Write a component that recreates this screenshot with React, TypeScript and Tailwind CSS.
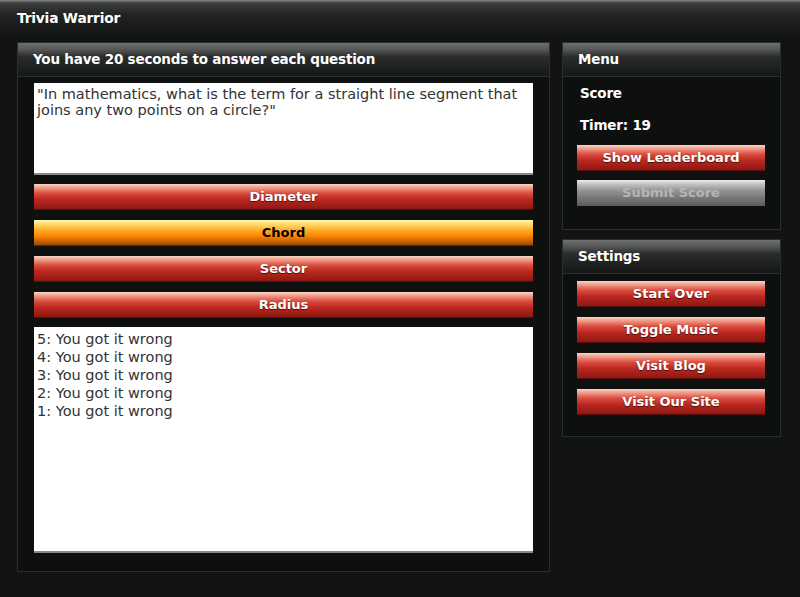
import React from 'react';

const answers = [
  { label: 'Diameter', active: false },
  { label: 'Chord', active: true },
  { label: 'Sector', active: false },
  { label: 'Radius', active: false },
];

const log = [5, 4, 3, 2, 1].map((n) => `${n}: You got it wrong`);

const font = 'font-["DejaVu_Sans",Verdana,sans-serif]';
const redBtn =
  'h-[26px] w-full flex items-center justify-center text-[13px] font-bold text-white [text-shadow:0_1px_1px_rgba(0,0,0,0.6)] bg-[linear-gradient(to_bottom,#fbd6c6_0%,#ef9c88_15%,#d84a3e_38%,#bb2820_62%,#8d1812_100%)] border-b border-[#5a0d0a]';
const orangeBtn =
  'h-[26px] w-full flex items-center justify-center text-[13px] font-bold text-black bg-[linear-gradient(to_bottom,#fff6b0_0%,#ffe070_15%,#ffb030_38%,#ff8a00_62%,#a04800_100%)] border-b border-[#5a2a00]';
const grayBtn =
  'h-[26px] w-full flex items-center justify-center text-[13px] font-bold text-[#b5b5b5] bg-[linear-gradient(to_bottom,#eeeeee_0%,#c4c4c4_15%,#959595_40%,#7a7a7a_65%,#5a5a5a_100%)]';

function PanelHeader({ title, h }: { title: string; h: string }) {
  return (
    <div
      className={`${h} flex items-center px-[15px] text-[13.5px] font-bold text-white tracking-[-0.2px] bg-[linear-gradient(to_bottom,#6e706f_0%,#555756_20%,#2a2c2b_42%,#161817_100%)] border-b border-[#2c302e]`}
    >
      {title}
    </div>
  );
}

export default function App() {
  return (
    <div className={`w-[800px] h-[597px] bg-[#111412] overflow-hidden ${font}`}>
      {/* Title bar */}
      <header className="h-[37px] flex items-center px-[17px] text-[13.8px] font-bold text-white tracking-[-0.2px] bg-[linear-gradient(to_bottom,#8a8a8a_0%,#3c3e3d_8%,#222423_40%,#121413_100%)]">
        Trivia Warrior
      </header>

      <main className="flex gap-[12px] pl-[17px] pt-[5px]">
        {/* Question panel */}
        <section className="w-[533px] h-[530px] border border-[#2a2e2c] bg-[#0e100f] flex flex-col">
          <PanelHeader title="You have 20 seconds to answer each question" h="h-[34px]" />
          <div className="px-[16px] pt-[6px] flex flex-col">
            <div className="h-[92px] bg-white px-[3px] pt-[3px] text-[14.5px] leading-[16px] text-[#333] border-b-2 border-[#888]">
              "In mathematics, what is the term for a straight line segment that joins any two points on a circle?"
            </div>
            <div className="flex flex-col gap-[10px] mt-[9px]">
              {answers.map((a) => (
                <button key={a.label} className={a.active ? orangeBtn : redBtn}>
                  {a.label}
                </button>
              ))}
            </div>
            <div className="h-[226px] mt-[9px] bg-white px-[3px] pt-[3px] text-[14.5px] leading-[18px] text-[#333] border-b-2 border-[#888]">
              {log.map((l) => (
                <div key={l}>{l}</div>
              ))}
            </div>
          </div>
        </section>

        {/* Sidebar */}
        <aside className="w-[219px] flex flex-col gap-[9px]">
          <section className="h-[188px] border border-[#2a2e2c] bg-[#0e100f]">
            <PanelHeader title="Menu" h="h-[34px]" />
            <div className="px-[14px]">
              <div className="pl-[3px] pt-[8px] text-[13.5px] font-bold text-white tracking-[-0.2px] leading-[16px]">Score</div>
              <div className="pl-[3px] pt-[16px] text-[13.5px] font-bold text-white tracking-[-0.2px] leading-[16px]">Timer: 19</div>
              <div className="flex flex-col gap-[9px] mt-[12px] w-[188px]">
                <button className={redBtn}>Show Leaderboard</button>
                <button className={grayBtn}>Submit Score</button>
              </div>
            </div>
          </section>

          <section className="h-[198px] border border-[#2a2e2c] bg-[#0e100f]">
            <PanelHeader title="Settings" h="h-[34px]" />
            <div className="px-[14px] pt-[7px] flex flex-col gap-[10px] w-[216px]">
              {['Start Over', 'Toggle Music', 'Visit Blog', 'Visit Our Site'].map((b) => (
                <button key={b} className={redBtn}>
                  {b}
                </button>
              ))}
            </div>
          </section>
        </aside>
      </main>
    </div>
  );
}
